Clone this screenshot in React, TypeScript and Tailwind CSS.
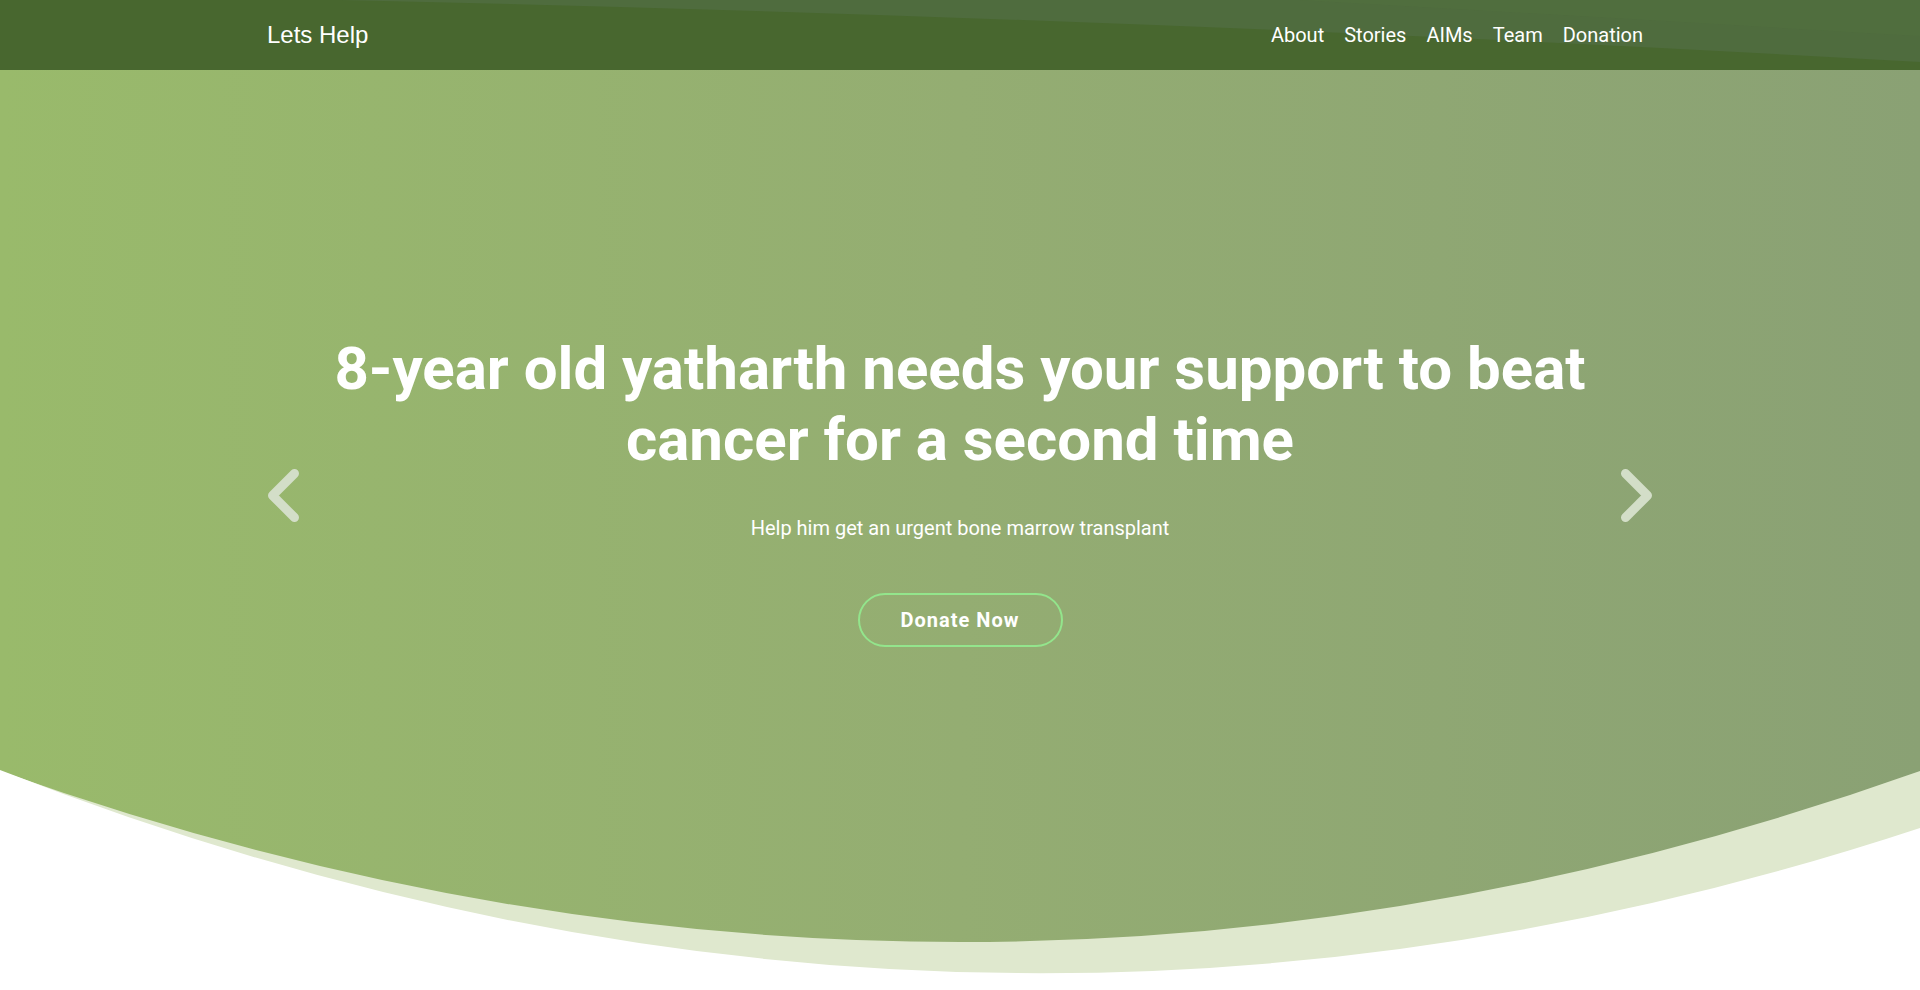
const links = ["About", "Stories", "AIMs", "Team", "Donation"];

function Chevron({ dir }: { dir: "left" | "right" }) {
  const d = dir === "left" ? "M28.5,5.5 L6.5,27.5 L28.5,49.5" : "M5.5,5.5 L27.5,27.5 L5.5,49.5";
  return (
    <svg viewBox="0 0 34 55" className="h-[55px] w-[34px]">
      <path d={d} fill="none" stroke="#d3dec8" strokeWidth="9" strokeLinecap="round" strokeLinejoin="round" />
    </svg>
  );
}

function Navbar() {
  return (
    <header className="relative h-[70px] overflow-hidden bg-[#48672f]">
      {/* faint lighter swoosh at the top right */}
      <svg
        className="pointer-events-none absolute inset-0 h-full w-full"
        viewBox="0 0 1920 70"
        preserveAspectRatio="none"
      >
        <path d="M340,0 Q1150,18 1920,62 L1920,0 Z" fill="#4f6c3e" />
        <path d="M1300,0 Q1650,20 1920,36 L1920,0 Z" fill="#51703f" opacity="0.6" />
      </svg>
      <nav className="relative ml-[267px] flex h-full w-[1376px] items-center justify-between">
        <a className="font-['Liberation_Sans',Arial,sans-serif] text-[24px] leading-none text-white">
          Lets Help
        </a>
        <ul className="flex items-center gap-[20px] font-['Roboto',sans-serif] text-[20px] leading-none text-white">
          {links.map((link) => (
            <li key={link}>
              <a>{link}</a>
            </li>
          ))}
        </ul>
      </nav>
    </header>
  );
}

function Hero() {
  return (
    <section className="relative h-[920px] overflow-hidden bg-gradient-to-r from-[#99ba6b] via-[#94ad72] to-[#8aa174]">
      <div className="relative ml-[266px] flex w-[1388px] items-start pt-[263px]">
        <button className="mt-[135px] flex h-[55px] w-[34px] items-center">
          <Chevron dir="left" />
        </button>
        <div className="flex flex-1 flex-col items-center text-center font-['Roboto',sans-serif] text-white">
          <h1 className="w-[1300px] text-[60px] font-bold leading-[71px]">
            8-year old yatharth needs your support to beat cancer for a second time
          </h1>
          <p className="mt-[38px] text-[20px] leading-[30px]">Help him get an urgent bone marrow transplant</p>
          <a className="mt-[50px] flex h-[54px] w-[205px] items-center justify-center rounded-full border-2 border-[#93e58c] text-[20px] font-bold tracking-[1px]">
            Donate Now
          </a>
        </div>
        <button className="mt-[135px] flex h-[55px] w-[34px] items-center">
          <Chevron dir="right" />
        </button>
      </div>
      {/* curved bottom edge */}
      <svg
        className="pointer-events-none absolute bottom-0 left-0 h-[230px] w-full"
        viewBox="0 690 1920 230"
        preserveAspectRatio="none"
      >
        <path d="M0,701 Q960,1043 1920,701 L1920,920 L0,920 Z" fill="#dfe8ce" />
        <path d="M0,700 Q960,1075 1920,758 L1920,920 L0,920 Z" fill="#ffffff" />
      </svg>
    </section>
  );
}

export default function App() {
  return (
    <div className="min-h-[990px] bg-white">
      <Navbar />
      <Hero />
    </div>
  );
}
